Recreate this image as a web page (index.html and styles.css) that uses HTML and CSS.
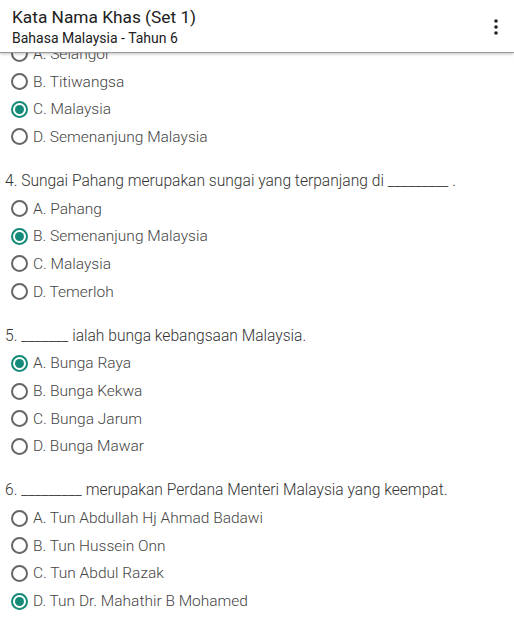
FILE: index.html
```html
<!DOCTYPE html>
<html>
<head>
<meta charset="utf-8">
<link rel="stylesheet" href="styles.css">
</head>
<body>
<header class="appbar">
  <div class="titles">
    <div class="title">Kata Nama Khas (Set 1)</div>
    <div class="subtitle">Bahasa Malaysia - Tahun 6</div>
  </div>
  <svg class="kebab" width="6" height="16" viewBox="0 0 6 16"><circle cx="3" cy="2" r="1.8" fill="#222"/><circle cx="3" cy="8" r="1.8" fill="#222"/><circle cx="3" cy="14" r="1.8" fill="#222"/></svg>
</header>
<main class="content">
  <section class="question first">
    <div class="opt"><span class="radio"></span>A. Selangor</div>
    <div class="opt"><span class="radio"></span>B. Titiwangsa</div>
    <div class="opt"><span class="radio on"></span>C. Malaysia</div>
    <div class="opt"><span class="radio"></span>D. Semenanjung Malaysia</div>
  </section>
  <section class="question">
    <div class="q">4. Sungai Pahang merupakan sungai yang terpanjang di _________ .</div>
    <div class="opt"><span class="radio"></span>A. Pahang</div>
    <div class="opt"><span class="radio on"></span>B. Semenanjung Malaysia</div>
    <div class="opt"><span class="radio"></span>C. Malaysia</div>
    <div class="opt"><span class="radio"></span>D. Temerloh</div>
  </section>
  <section class="question">
    <div class="q">5. _______ ialah bunga kebangsaan Malaysia.</div>
    <div class="opt"><span class="radio on"></span>A. Bunga Raya</div>
    <div class="opt"><span class="radio"></span>B. Bunga Kekwa</div>
    <div class="opt"><span class="radio"></span>C. Bunga Jarum</div>
    <div class="opt"><span class="radio"></span>D. Bunga Mawar</div>
  </section>
  <section class="question">
    <div class="q">6. _________ merupakan Perdana Menteri Malaysia yang keempat.</div>
    <div class="opt"><span class="radio"></span>A. Tun Abdullah Hj Ahmad Badawi</div>
    <div class="opt"><span class="radio"></span>B. Tun Hussein Onn</div>
    <div class="opt"><span class="radio"></span>C. Tun Abdul Razak</div>
    <div class="opt"><span class="radio on"></span>D. Tun Dr. Mahathir B Mohamed</div>
  </section>
</main>
</body>
</html>
```
FILE: styles.css
```css
html, body {
  margin: 0;
  padding: 0;
  background: #fff;
  overflow: hidden;
}
body {
  width: 514px;
  height: 630px;
  font-family: Roboto, "Noto Sans", sans-serif;
}
.appbar {
  position: relative;
  z-index: 2;
  height: 53px;
  box-sizing: border-box;
  background: #fff;
  display: flex;
  align-items: center;
  justify-content: space-between;
  padding: 1px 15px 0 12px;
  border-bottom: 1px solid #9a9a9a;
  box-shadow: 0 1px 3px rgba(0,0,0,0.25);
}
.title {
  font-size: 17.3px;
  color: #212121;
  line-height: 22px;
}
.subtitle {
  font-size: 14px;
  color: #212121;
  line-height: 18px;
  margin-top: 1px;
}
.kebab {
  margin-top: 1px;
}
.content {
  position: relative;
  z-index: 1;
  margin-top: -13px;
  display: flex;
  flex-direction: column;
  gap: 16px;
}
.q {
  font-size: 15.6px;
  font-weight: 300;
  color: #333;
  padding-left: 5px;
  height: 28px;
  line-height: 28px;
}
.opt {
  display: flex;
  align-items: center;
  height: 27.7px;
  padding-left: 11px;
  font-size: 15.5px;
  font-weight: 300;
  color: #444;
}
.radio {
  width: 17px;
  height: 17px;
  box-sizing: border-box;
  border: 2px solid #666;
  border-radius: 50%;
  margin-right: 5px;
  display: flex;
  align-items: center;
  justify-content: center;
  flex: none;
}
.radio.on {
  border-color: #148a78;
}
.radio.on::after {
  content: "";
  width: 9px;
  height: 9px;
  border-radius: 50%;
  background: #148a78;
}
```
